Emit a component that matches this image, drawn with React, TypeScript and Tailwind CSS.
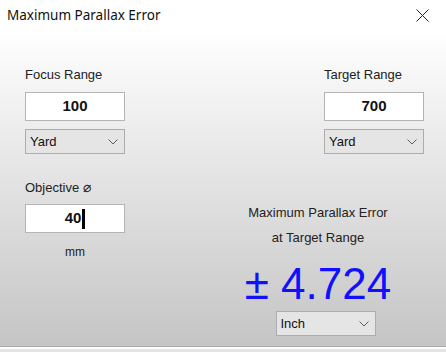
import React from "react";

const font = { fontFamily: '"Liberation Sans", Arial, sans-serif' };

function Chevron() {
  return (
    <svg width="10" height="6" viewBox="0 0 10 6" className="text-[#606060]">
      <path d="M0.5 0.5 L5 5 L9.5 0.5" fill="none" stroke="currentColor" strokeWidth="1" />
    </svg>
  );
}

function Select({ value }: { value: string }) {
  return (
    <div className="flex h-[25px] w-[100px] items-center justify-between border border-[#adadad] bg-[#e5e5e5] pl-[4px] pr-[6px] text-[13px] text-[#111]">
      <span>{value}</span>
      <Chevron />
    </div>
  );
}

function NumberBox({ value, caret }: { value: string; caret?: boolean }) {
  return (
    <div className="flex h-[29px] w-[100px] items-center justify-center border border-[#b4b4b4] bg-white text-[15px] font-bold text-[#111]">
      <span>{value}</span>
      {caret && <span className="ml-[1px] h-[20px] w-[3px] bg-black" />}
    </div>
  );
}

export default function App() {
  return (
    <div className="flex h-[352px] w-[446px] flex-col overflow-hidden bg-white" style={font}>
      <div className="flex h-[30px] items-center justify-between pl-[7px] pr-[17px]">
        <span className="text-[13.5px] text-[#111]" style={{ fontFamily: '"Noto Sans", sans-serif' }}>
          Maximum Parallax Error
        </span>
        <svg width="13" height="13" viewBox="0 0 13 13">
          <path d="M0.5 0.5 L12.5 12.5 M12.5 0.5 L0.5 12.5" stroke="#222" strokeWidth="1" />
        </svg>
      </div>

      <div className="flex flex-1 flex-col bg-gradient-to-b from-white to-[#c5c5c5]">
        <div className="flex justify-between pl-[25px] pr-[22px] pt-[37px]">
          <div className="flex flex-col">
            <span className="h-[16px] text-[13px] leading-[16px] text-[#222]">Focus Range</span>
            <div className="mt-[9px]">
              <NumberBox value="100" />
            </div>
            <div className="mt-[8px]">
              <Select value="Yard" />
            </div>
          </div>
          <div className="flex flex-col">
            <span className="h-[16px] text-[13px] leading-[16px] text-[#222]">Target Range</span>
            <div className="mt-[9px]">
              <NumberBox value="700" />
            </div>
            <div className="mt-[8px]">
              <Select value="Yard" />
            </div>
          </div>
        </div>

        <div className="flex pl-[25px]">
          <div className="flex w-[100px] flex-col pt-[25px]">
            <span className="h-[16px] text-[13px] leading-[16px] text-[#222]">
              Objective <span style={{ fontFamily: '"DejaVu Sans", sans-serif' }} className="text-[14px] leading-[16px]">⌀</span>
            </span>
            <div className="mt-[9px]">
              <NumberBox value="40" caret />
            </div>
            <span className="mt-[10px] text-center text-[12px] text-[#222]">mm</span>
          </div>
          <div className="ml-[93px] flex w-[200px] flex-col items-center pt-[46px]">
            <span className="text-[13px] leading-[25px] text-[#222]">Maximum Parallax Error</span>
            <span className="text-[13px] leading-[25px] text-[#222]">at Target Range</span>
            <span className="mt-[12px] text-[44px] leading-[44px] text-[#1010ff]">± 4.724</span>
            <div className="ml-[15px] mt-[5px]">
              <Select value="Inch" />
            </div>
          </div>
        </div>
      </div>

      <div className="h-[1px] bg-[#a8a8a8]" />
      <div className="h-[2px] bg-white" />
      <div className="h-[3px] bg-[#e4e4e4]" />
    </div>
  );
}
